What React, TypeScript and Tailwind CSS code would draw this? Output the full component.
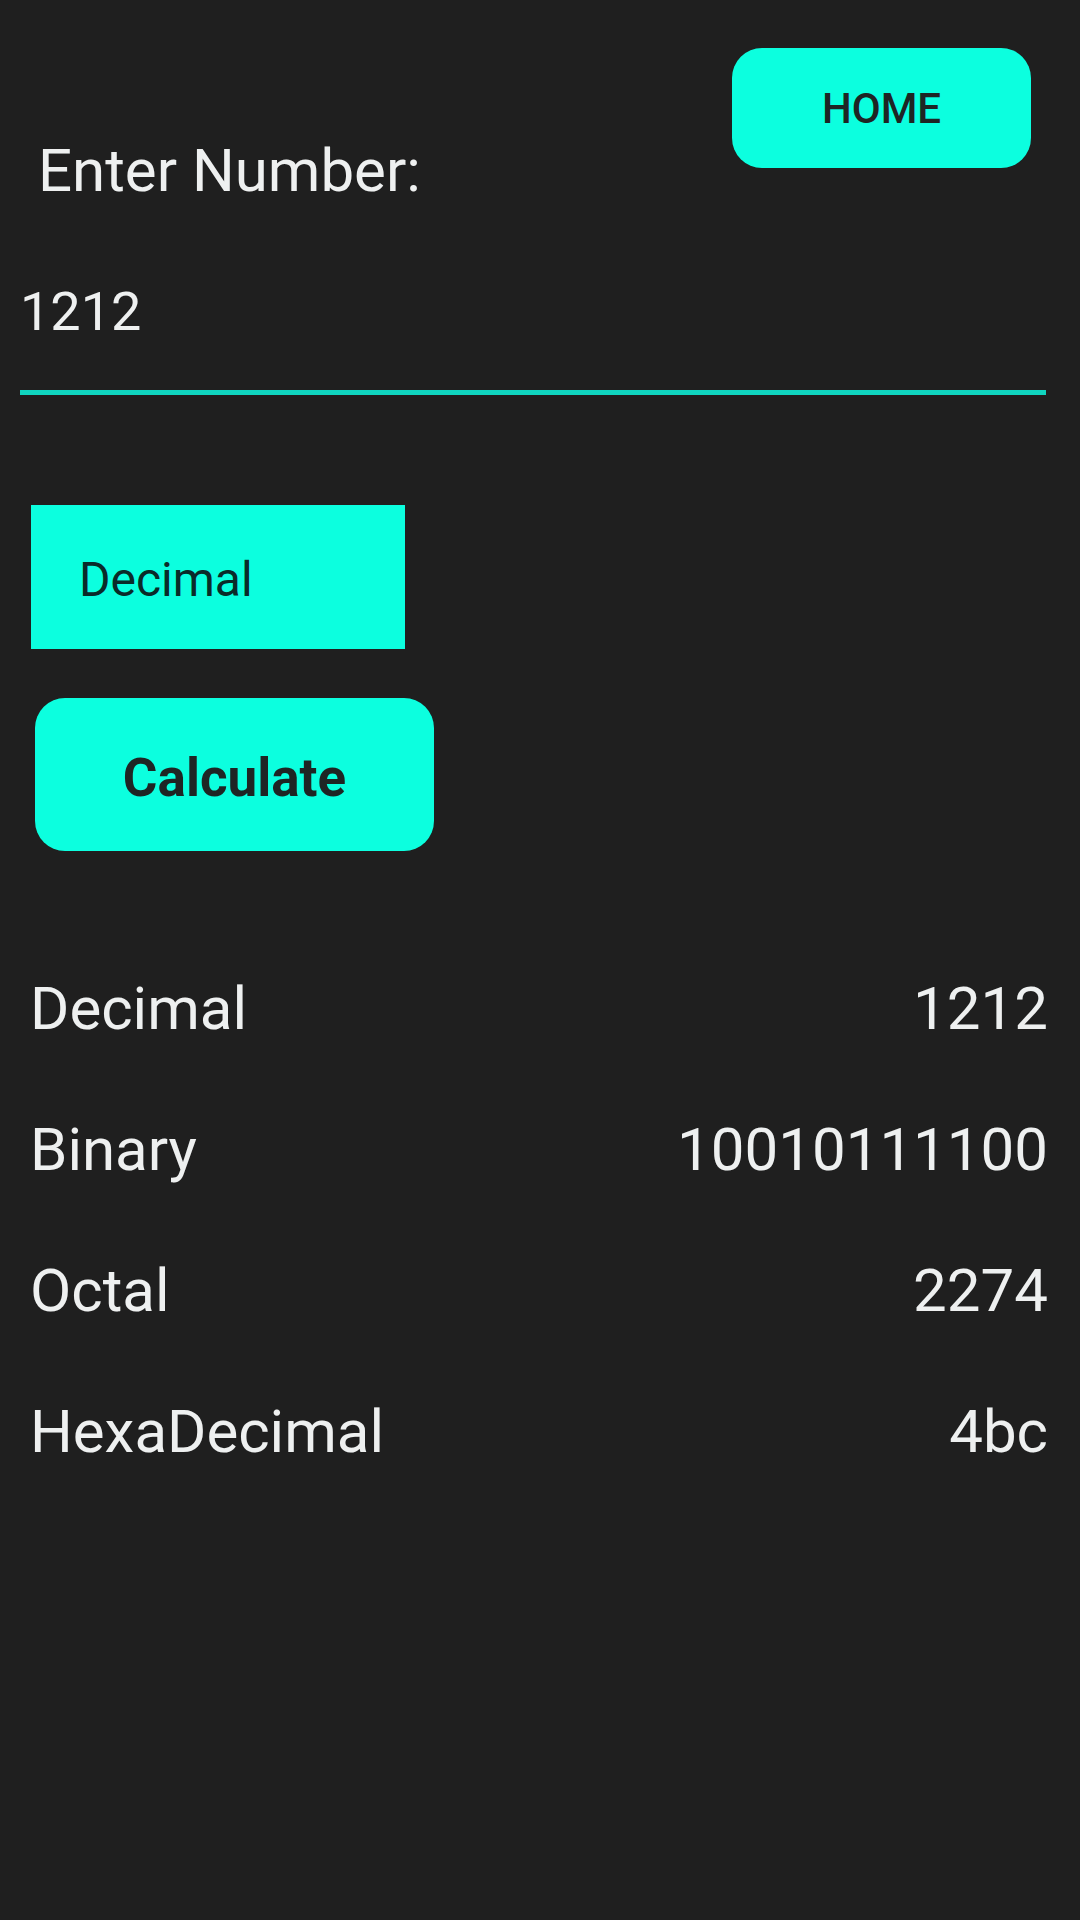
import { useState } from 'react';

const rows = [
  { label: 'Decimal', value: '1212' },
  { label: 'Binary', value: '10010111100' },
  { label: 'Octal', value: '2274' },
  { label: 'HexaDecimal', value: '4bc' },
];

export default function App() {
  const [num, setNum] = useState('1212');

  return (
    <div
      className="w-[1080px] h-[1920px] bg-[#1f1f1f] text-[#eef0f0] overflow-hidden"
      style={{ fontFamily: 'Roboto, "Noto Sans", sans-serif' }}
    >
      {/* Header */}
      <div className="flex items-start justify-between pt-[48px] pr-[49px]">
        <div className="pl-[38px] pt-[93px] text-[60px] leading-none">Enter Number:</div>
        <button className="w-[299px] h-[120px] rounded-[30px] bg-[#0cffdf] text-[#1e2524] text-[42px] font-medium leading-none flex items-center justify-center pt-[2px]">
          HOME
        </button>
      </div>

      {/* Input */}
      <div className="mt-[56px] ml-[20px] w-[1026px]">
        <input
          value={num}
          onChange={(e) => setNum(e.target.value)}
          className="w-full h-[138px] bg-transparent outline-none text-[54px] leading-none pl-0 pt-[16px] pb-[40px] text-[#eef0f0] border-b-[5px] border-[#10d5c0]"
        />
      </div>

      {/* Base select */}
      <div className="mt-[110px] ml-[31px] w-[374px] h-[144px] bg-[#0cffdf] flex items-center pl-[48px] pt-[6px]">
        <span className="text-[48px] leading-none text-[#0a2b29]">Decimal</span>
      </div>

      <button className="mt-[49px] ml-[35px] w-[399px] h-[153px] rounded-[30px] bg-[#0cffdf] text-[#1e2524] text-[53px] font-bold leading-none flex items-center justify-center pt-[8px]">
        Calculate
      </button>

      {/* Results */}
      <div className="mt-[87px] pl-[30px] pr-[32px] flex flex-col">
        {rows.map((r) => (
          <div key={r.label} className="h-[141px] flex items-center justify-between text-[60px] leading-none">
            <span>{r.label}</span>
            <span>{r.value}</span>
          </div>
        ))}
      </div>
    </div>
  );
}
